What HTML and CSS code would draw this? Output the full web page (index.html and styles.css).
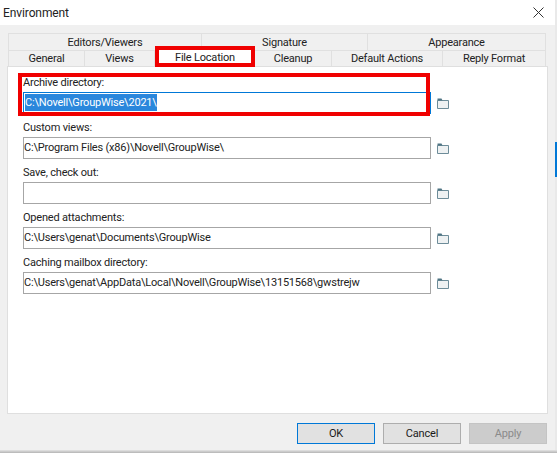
FILE: index.html
```html
<!DOCTYPE html>
<html lang="en">
<head>
    <meta charset="UTF-8">
    <title>Environment</title>
    <link rel="stylesheet" href="styles.css">
</head>
<body>
    <svg width="0" height="0" class="defs">
        <symbol id="folder" viewBox="0 0 12 11">
            <path d="M0.5 2.5h11v8h-11z" fill="#eef1f2" stroke="#6d8c99"/>
            <path d="M0.5 2.5v-2h4l1 2z" fill="#4f7483"/>
        </symbol>
    </svg>

    <div class="dialog">
        <div class="title-bar">
            <span class="title">Environment</span>
            <svg class="close" width="11" height="11" viewBox="0 0 11 11">
                <path d="M0.5 0.5l10 10M10.5 0.5l-10 10" stroke="#333" stroke-width="1" fill="none"/>
            </svg>
        </div>

        <div class="content">
            <!-- Tabs -->
            <div class="tab-row row-top">
                <div class="tab w-editors">Editors/Viewers</div>
                <div class="tab w-signature">Signature</div>
                <div class="tab w-appearance">Appearance</div>
            </div>
            <div class="tab-row row-bottom">
                <div class="tab w-general">General</div>
                <div class="tab w-views">Views</div>
                <div class="tab tab-active">File Location</div>
                <div class="tab w-cleanup">Cleanup</div>
                <div class="tab w-actions">Default Actions</div>
                <div class="tab w-reply">Reply Format</div>
            </div>

            <!-- File Location page -->
            <div class="panel">
                <div class="field">
                    <label>Archive directory:</label>
                    <div class="input-line">
                        <div class="text-input focused"><span class="selected">C:\Novell\GroupWise\2021\</span></div>
                        <svg class="folder" width="12" height="11"><use href="#folder"/></svg>
                    </div>
                </div>
                <div class="field">
                    <label>Custom views:</label>
                    <div class="input-line">
                        <div class="text-input">C:\Program Files (x86)\Novell\GroupWise\</div>
                        <svg class="folder" width="12" height="11"><use href="#folder"/></svg>
                    </div>
                </div>
                <div class="field">
                    <label>Save, check out:</label>
                    <div class="input-line">
                        <div class="text-input"></div>
                        <svg class="folder" width="12" height="11"><use href="#folder"/></svg>
                    </div>
                </div>
                <div class="field">
                    <label>Opened attachments:</label>
                    <div class="input-line">
                        <div class="text-input">C:\Users\genat\Documents\GroupWise</div>
                        <svg class="folder" width="12" height="11"><use href="#folder"/></svg>
                    </div>
                </div>
                <div class="field">
                    <label>Caching mailbox directory:</label>
                    <div class="input-line">
                        <div class="text-input">C:\Users\genat\AppData\Local\Novell\GroupWise\13151568\gwstrejw</div>
                        <svg class="folder" width="12" height="11"><use href="#folder"/></svg>
                    </div>
                </div>
            </div>

            <div class="buttons">
                <button class="btn btn-default">OK</button>
                <button class="btn">Cancel</button>
                <button class="btn btn-disabled">Apply</button>
            </div>
        </div>

        <!-- Red annotation boxes drawn on the screenshot -->
        <div class="mark mark-tab"></div>
        <div class="mark mark-field"></div>
    </div>

    <div class="behind"><div class="behind-blue"></div></div>
    <div class="shadow"></div>
</body>
</html>
```

FILE: styles.css
```css
html, body {
    margin: 0;
    padding: 0;
}

body {
    width: 557px;
    height: 453px;
    overflow: hidden;
    display: grid;
    grid-template-columns: 555px 2px;
    grid-template-rows: 450px 3px;
    font-family: Roboto, "Liberation Sans", sans-serif;
    font-size: 11px;
    letter-spacing: -0.2px;
    color: #1a1a1a;
    background-color: #f0f0f0;
}

.defs {
    position: absolute;
}

.dialog {
    position: relative;
    display: flex;
    flex-direction: column;
    background-color: #f0f0f0;
}

.title-bar {
    height: 25px;
    display: flex;
    align-items: center;
    justify-content: space-between;
    padding: 0 11px 0 3px;
    background-color: #fff;
}

.title {
    font-size: 12px;
    letter-spacing: -0.1px;
    color: #222;
}

.content {
    padding: 8px 0 0 7px;
    width: 541px;
}

.tab-row {
    display: flex;
    padding-left: 1px;
}

.tab {
    box-sizing: border-box;
    display: flex;
    align-items: center;
    justify-content: center;
    background-color: #f0f0f0;
    border: 1px solid #e0e0e0;
    border-bottom: none;
    border-left: none;
    color: #222;
}

.tab-row .tab:first-child {
    border-left: 1px solid #e0e0e0;
}

.row-top .tab {
    height: 17px;
}

.row-bottom .tab {
    height: 16px;
}

.w-editors { width: 194px; }
.w-signature { width: 166px; }
.w-appearance { width: 178px; }
.w-general { width: 77px; }
.w-views { width: 70px; }
.w-cleanup { width: 77px; }
.w-actions { width: 111px; }
.w-reply { width: 103px; }

.row-bottom .tab-active {
    width: 100px;
    height: 16px;
    padding-bottom: 2px;
    background-color: #fff;
    border: none;
}

.panel {
    box-sizing: border-box;
    width: 541px;
    height: 348px;
    padding: 7px 0 0 15px;
    background-color: #fff;
    border: 1px solid #dfdfdf;
}

.field {
    margin-bottom: 5px;
}

label {
    display: block;
    height: 18px;
    line-height: 18px;
    color: #222;
}

.input-line {
    display: flex;
    align-items: center;
}

.text-input {
    box-sizing: border-box;
    width: 408px;
    height: 22px;
    line-height: 19px;
    padding: 0;
    border: 1px solid #a6a6a6;
    background-color: #fff;
    white-space: nowrap;
    overflow: hidden;
    color: #222;
}

.focused {
    border-color: #0078d7;
}

.selected {
    display: inline-block;
    height: 17px;
    line-height: 17px;
    margin: 1px 0 0 1px;
    background-color: #2a87dc;
    color: #fff;
    vertical-align: top;
}

.folder {
    margin: 0 0 0 6px;
}

.buttons {
    display: flex;
    justify-content: flex-end;
    gap: 8px;
    width: 540px;
    margin-top: 9px;
}

.btn {
    box-sizing: border-box;
    width: 78px;
    height: 21px;
    padding: 0;
    font-family: inherit;
    font-size: 11px;
    letter-spacing: -0.2px;
    color: #1a1a1a;
    background-color: #e1e1e1;
    border: 1px solid #adadad;
}

.btn-default {
    border: 1px solid #0078d7;
}

.btn-disabled {
    color: #8a8a8a;
    background-color: #cccccc;
    border-color: #c4c4c4;
}

.mark {
    position: absolute;
    box-sizing: border-box;
    border: 4px solid #f00000;
}

.mark-tab {
    left: 155px;
    top: 46px;
    width: 100px;
    height: 21px;
}

.mark-field {
    left: 18px;
    top: 73px;
    width: 412px;
    height: 43px;
}

.behind {
    background-color: #e9e9e9;
}

.behind-blue {
    height: 35px;
    margin-top: 142px;
    background-color: #0078d7;
}

.shadow {
    grid-column: 1 / 3;
    background: linear-gradient(#e4e4e4, #b4b4b4);
}
```
